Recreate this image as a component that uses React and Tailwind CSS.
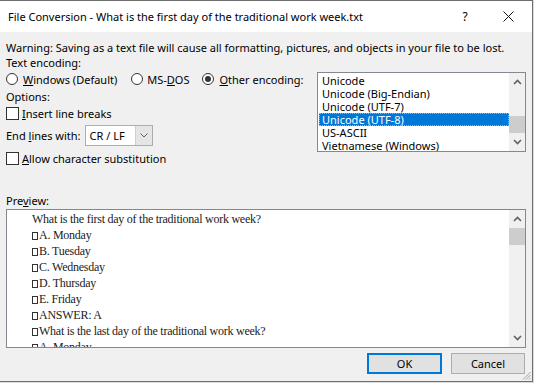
function ChevronUp() {
  return (
    <svg width="9" height="6" viewBox="0 0 9 6" className="block">
      <path d="M1 5 L4.5 1.5 L8 5" fill="none" stroke="#606060" strokeWidth="1.6" />
    </svg>
  )
}

function ChevronDown() {
  return (
    <svg width="9" height="6" viewBox="0 0 9 6" className="block">
      <path d="M1 1 L4.5 4.5 L8 1" fill="none" stroke="#606060" strokeWidth="1.6" />
    </svg>
  )
}

function Scrollbar({ thumbTop, thumbHeight }) {
  return (
    <div className="relative w-[16px] h-full bg-[#f0f0f0] flex flex-col items-center justify-between py-[6px]">
      <ChevronUp />
      <div
        className="absolute left-0 w-[16px] bg-[#cdcdcd]"
        style={{ top: thumbTop, height: thumbHeight }}
      />
      <ChevronDown />
    </div>
  )
}

function Radio({ checked }) {
  return (
    <span className="w-[12px] h-[12px] rounded-full border border-[#333] bg-white flex items-center justify-center shrink-0">
      {checked && <span className="w-[6px] h-[6px] rounded-full bg-[#333]" />}
    </span>
  )
}

function Checkbox() {
  return <span className="w-[13px] h-[13px] border border-[#333] bg-white shrink-0" />
}

function Tofu() {
  return <span className="inline-block w-[6px] h-[8px] border border-[#333] mr-[1px] align-[-1px]" />
}

const encodings = ['Unicode', 'Unicode (Big-Endian)', 'Unicode (UTF-7)', 'Unicode (UTF-8)', 'US-ASCII', 'Vietnamese (Windows)']

const preview = [
  { text: 'What is the first day of the traditional work week?', box: false },
  { text: 'A. Monday', box: true },
  { text: 'B. Tuesday', box: true },
  { text: 'C. Wednesday', box: true },
  { text: 'D. Thursday', box: true },
  { text: 'E. Friday', box: true },
  { text: 'ANSWER: A', box: true },
  { text: 'What is the last day of the traditional work week?', box: true },
  { text: 'A. Monday', box: true },
]

export default function App() {
  return (
    <div className="w-[534px] h-[383px] bg-[#dcdcdc] overflow-hidden font-['Noto_Sans',sans-serif] text-[11px] text-black">
      <div className="relative w-[533px] h-[382px] border-t border-r border-b border-[#6e6e6e] flex flex-col bg-[#f0f0f0]">
        {/* Title bar */}
        <div className="h-[31px] bg-white flex items-center pl-[8px] shrink-0">
          <span className="flex-1 leading-[15px]">File Conversion - What is the first day of the traditional work week.txt</span>
          <span className="w-[20px] text-center text-[12px] mr-[28px]">?</span>
          <svg width="11" height="11" viewBox="0 0 11 11" className="mr-[18px]">
            <path d="M0.5 0.5 L10.5 10.5 M10.5 0.5 L0.5 10.5" stroke="#111" strokeWidth="1" />
          </svg>
        </div>

        {/* Client area */}
        <div className="flex-1 px-[6px] pt-[8px] flex flex-col leading-[15px]">
          <div className="whitespace-nowrap">Warning: Saving as a text file will cause all formatting, pictures, and objects in your file to be lost.</div>
          <div>Text encoding:</div>

          <div className="flex">
            <div className="w-[311px] flex flex-col">
              <div className="h-[18px] flex items-center">
                <Radio />
                <span className="ml-[5px]"><u>W</u>indows (Default)</span>
                <span className="ml-[14px]"><Radio /></span>
                <span className="ml-[4px]">MS-<u>D</u>OS</span>
                <span className="ml-[13px]"><Radio checked /></span>
                <span className="ml-[5px]"><u>O</u>ther encoding:</span>
              </div>
              <div className="h-[17px] flex items-center">Options:</div>
              <div className="h-[17px] flex items-center">
                <Checkbox />
                <span className="ml-[3px]"><u>I</u>nsert line breaks</span>
              </div>
              <div className="mt-[3px] h-[21px] flex items-center">
                <span>End <u>l</u>ines with:</span>
                <div className="ml-[4px] w-[68px] h-[21px] border border-[#adadad] bg-white flex">
                  <span className="flex-1 pl-[4px] flex items-center">CR / LF</span>
                  <span className="w-[17px] bg-[#e5e5e5] border-l border-[#cfcfcf] flex items-center justify-center">
                    <svg width="8" height="5" viewBox="0 0 8 5">
                      <path d="M0.5 0.5 L4 4 L7.5 0.5" fill="none" stroke="#606060" strokeWidth="1" />
                    </svg>
                  </span>
                </div>
              </div>
              <div className="mt-[4px] h-[16px] flex items-center">
                <Checkbox />
                <span className="ml-[3px]"><u>A</u>llow character substitution</span>
              </div>
            </div>

            {/* Encoding list */}
            <div className="mt-[2px] w-[209px] h-[80px] border border-[#828790] bg-white flex">
              <div className="flex-1 pt-[1px] pl-[1px] overflow-hidden leading-[13px]">
                {encodings.map((e) => (
                  <div
                    key={e}
                    className={
                      e === 'Unicode (UTF-8)'
                        ? 'h-[13px] pl-[2px] bg-[#0078d7] text-white border border-dotted border-[#ff9a3c] flex items-center'
                        : 'h-[13px] pl-[3px] flex items-center'
                    }
                  >
                    {e}
                  </div>
                ))}
              </div>
              <Scrollbar thumbTop={43} thumbHeight={17} />
            </div>
          </div>

          <div className="mt-[27px]">Pre<u>v</u>iew:</div>
          <div className="mt-[1px] h-[139px] border border-[#828790] bg-white flex">
            <div className="flex-1 overflow-hidden pl-[25px] pt-[1px] font-['Liberation_Serif',serif] text-[12px] tracking-[-0.25px] leading-[16px] text-[#222]">
              {preview.map((p, i) => (
                <div key={i} className="whitespace-nowrap">
                  {p.box && <Tofu />}
                  {p.text}
                </div>
              ))}
            </div>
            <Scrollbar thumbTop={18} thumbHeight={17} />
          </div>

          <div className="mt-[5px] flex justify-end gap-[9px] pr-[1px]">
            <button className="w-[75px] h-[21px] bg-[#e1e1e1] border-2 border-[#0078d7] flex items-center justify-center">OK</button>
            <button className="w-[74px] h-[21px] bg-[#e1e1e1] border border-[#adadad] flex items-center justify-center">Cancel</button>
          </div>
        </div>

        {/* Resize grip */}
        <svg width="9" height="9" viewBox="0 0 9 9" className="absolute right-[1px] bottom-[1px]">
          <path d="M8.5 1 L1 8.5 M8.5 4 L4 8.5 M8.5 7 L7 8.5" stroke="#a0a0a0" strokeWidth="1" />
        </svg>
      </div>
    </div>
  )
}
